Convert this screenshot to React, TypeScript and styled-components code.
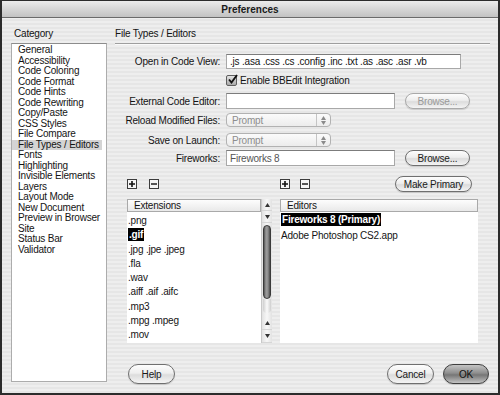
import styled, { createGlobalStyle } from "styled-components";

const GlobalStyle = createGlobalStyle`
  html, body {
    margin: 0;
    padding: 0;
    background: #ffffff;
  }
  body {
    font-family: "Liberation Sans", Arial, sans-serif;
    font-size: 10px;
    letter-spacing: -0.2px;
    color: #141414;
  }
`;

const categories = [
  "General",
  "Accessibility",
  "Code Coloring",
  "Code Format",
  "Code Hints",
  "Code Rewriting",
  "Copy/Paste",
  "CSS Styles",
  "File Compare",
  "File Types / Editors",
  "Fonts",
  "Highlighting",
  "Invisible Elements",
  "Layers",
  "Layout Mode",
  "New Document",
  "Preview in Browser",
  "Site",
  "Status Bar",
  "Validator",
];

const extensions = [
  ".png",
  ".gif",
  ".jpg .jpe .jpeg",
  ".fla",
  ".wav",
  ".aiff .aif .aifc",
  ".mp3",
  ".mpg .mpeg",
  ".mov",
];

const editors = ["Fireworks 8 (Primary)", "Adobe Photoshop CS2.app"];

const Up = () => (
  <svg width="5" height="4" viewBox="0 0 5 4">
    <path d="M2.5 0 L5 4 L0 4 Z" fill="#333" />
  </svg>
);

const Down = () => (
  <svg width="5" height="4" viewBox="0 0 5 4">
    <path d="M0 0 L5 0 L2.5 4 Z" fill="#333" />
  </svg>
);

const PlusIcon = () => (
  <svg width="8" height="8" viewBox="0 0 8 8">
    <path d="M4 1 V7 M1 4 H7" stroke="#111" strokeWidth="1.6" />
  </svg>
);

const MinusIcon = () => (
  <svg width="8" height="8" viewBox="0 0 8 8">
    <path d="M1 4 H7" stroke="#111" strokeWidth="1.4" />
  </svg>
);

const CheckMark = () => (
  <svg width="11" height="11" viewBox="0 0 11 11">
    <path d="M2 5.5 L4.5 8.5 L10 1" stroke="#111" strokeWidth="1.9" fill="none" />
  </svg>
);

export default function App() {
  return (
    <>
      <GlobalStyle />
      <Window>
        <TitleBar>Preferences</TitleBar>
        <Body>
          <Sidebar>
            <SideLabel>Category</SideLabel>
            <SideList>
              {categories.map((c) => (
                <SideItem key={c} $selected={c === "File Types / Editors"}>
                  {c}
                </SideItem>
              ))}
            </SideList>
          </Sidebar>

          <Main>
            <PaneHeader>File Types / Editors</PaneHeader>

            <FormRow $mt={10} $h={15}>
              <Label>Open in Code View:</Label>
              <TextField $w={235} $h={15}>
                .js .asa .css .cs .config .inc .txt .as .asc .asr .vb
              </TextField>
            </FormRow>

            <FormRow $mt={6} $h={11}>
              <Label />
              <CheckBox>
                <CheckMark />
              </CheckBox>
              <CheckText>Enable BBEdit Integration</CheckText>
            </FormRow>

            <FormRow $mt={7} $h={16}>
              <Label>External Code Editor:</Label>
              <TextField $w={169} $h={16} />
              <PillButton $w={65} $h={16} $disabled>
                Browse...
              </PillButton>
            </FormRow>

            <FormRow $mt={4} $h={14}>
              <Label>Reload Modified Files:</Label>
              <Popup>
                <PopupText>Prompt</PopupText>
                <Stepper>
                  <Up />
                  <Down />
                </Stepper>
              </Popup>
            </FormRow>

            <FormRow $mt={6} $h={14}>
              <Label>Save on Launch:</Label>
              <Popup>
                <PopupText>Prompt</PopupText>
                <Stepper>
                  <Up />
                  <Down />
                </Stepper>
              </Popup>
            </FormRow>

            <FormRow $mt={3} $h={16}>
              <Label>Fireworks:</Label>
              <TextField $w={169} $h={16} $dim>
                Fireworks 8
              </TextField>
              <PillButton $w={65} $h={16}>
                Browse...
              </PillButton>
            </FormRow>

            <ListsArea>
              <ListColumn $w={145}>
                <Toolbar $gap={12}>
                  <SquareButton>
                    <PlusIcon />
                  </SquareButton>
                  <SquareButton>
                    <MinusIcon />
                  </SquareButton>
                </Toolbar>
                <ListFrame>
                  <ListBox>
                    <ColumnHeader>Extensions</ColumnHeader>
                    <ListRows $lh={14.3} $pt={2}>
                      {extensions.map((e) => (
                        <ListRow key={e} $lh={14.3}>
                          {e === ".gif" ? <Selected>{e}</Selected> : e}
                        </ListRow>
                      ))}
                    </ListRows>
                  </ListBox>
                  <ScrollBar>
                    <ArrowBox $h={12}>
                      <Up />
                    </ArrowBox>
                    <ArrowBox $h={12}>
                      <Down />
                    </ArrowBox>
                    <Track>
                      <Thumb />
                      <TrackEnd />
                    </Track>
                    <ArrowBox $h={13}>
                      <Up />
                    </ArrowBox>
                    <ArrowBox $h={13}>
                      <Down />
                    </ArrowBox>
                  </ScrollBar>
                </ListFrame>
              </ListColumn>

              <ListColumn $w={198}>
                <Toolbar $gap={10}>
                  <SquareButton>
                    <PlusIcon />
                  </SquareButton>
                  <SquareButton>
                    <MinusIcon />
                  </SquareButton>
                  <PrimaryButton $w={77} $h={16}>
                    Make Primary
                  </PrimaryButton>
                </Toolbar>
                <ListFrame>
                  <ListBox>
                    <ColumnHeader>Editors</ColumnHeader>
                    <ListRows $lh={16} $pt={0}>
                      {editors.map((e, i) => (
                        <ListRow key={e} $lh={16}>
                          {i === 0 ? <Selected>{e}</Selected> : e}
                        </ListRow>
                      ))}
                    </ListRows>
                  </ListBox>
                </ListFrame>
              </ListColumn>
            </ListsArea>

            <Footer>
              <PillButton $w={47} $h={20}>
                Help
              </PillButton>
              <ButtonGroup>
                <PillButton $w={47} $h={20}>
                  Cancel
                </PillButton>
                <DefaultButton $w={46} $h={20}>
                  OK
                </DefaultButton>
              </ButtonGroup>
            </Footer>
          </Main>
        </Body>
      </Window>
    </>
  );
}

const Window = styled.div`
  width: 500px;
  height: 395px;
  box-sizing: border-box;
  border: 2px solid #2c2c2c;
  border-top-width: 1px;
  display: flex;
  flex-direction: column;
  overflow: hidden;
  background: repeating-linear-gradient(
    180deg,
    #eeeeee 0px,
    #eeeeee 2px,
    #e6e6e6 2px,
    #e6e6e6 4px
  );
`;

const TitleBar = styled.div`
  height: 17px;
  box-sizing: border-box;
  border-bottom: 1px solid #6a6a6a;
  background: linear-gradient(180deg, #ececec 0%, #d6d6d6 50%, #c2c2c2 100%);
  display: flex;
  align-items: center;
  justify-content: center;
  font-weight: bold;
  letter-spacing: 0;
  color: #1a1a1a;
`;

const Body = styled.div`
  flex: 1;
  display: flex;
  padding: 10px 8px 0 9px;
`;

const Sidebar = styled.div`
  width: 96px;
  margin-right: 8px;
  display: flex;
  flex-direction: column;
`;

const SideLabel = styled.div`
  line-height: 12px;
  padding-left: 3px;
  margin-bottom: 3px;
`;

const SideList = styled.div`
  height: 339px;
  box-sizing: border-box;
  background: #ffffff;
  border: 1px solid #acacac;
  border-top-color: #8c8c8c;
  padding-top: 1px;
`;

const SideItem = styled.div<{ $selected?: boolean }>`
  height: 10.5px;
  line-height: 10.5px;
  padding-left: 6px;
  margin-right: 4px;
  white-space: nowrap;
  background: ${({ $selected }) => ($selected ? "#d4d4d4" : "transparent")};
`;

const Main = styled.div`
  width: 375px;
  display: flex;
  flex-direction: column;
`;

const PaneHeader = styled.div`
  line-height: 12px;
  padding-bottom: 3px;
  border-bottom: 1px solid #9e9e9e;
  box-shadow: 0 1px 0 #fafafa;
`;

const FormRow = styled.div<{ $mt: number; $h: number }>`
  display: flex;
  align-items: center;
  height: ${({ $h }) => $h}px;
  margin-top: ${({ $mt }) => $mt}px;
`;

const Label = styled.div`
  width: 105px;
  flex-shrink: 0;
  margin-right: 6px;
  text-align: right;
  white-space: nowrap;
`;

const TextField = styled.div<{ $w: number; $h: number; $dim?: boolean }>`
  width: ${({ $w }) => $w}px;
  height: ${({ $h }) => $h}px;
  box-sizing: border-box;
  background: #ffffff;
  border: 1px solid #a8a8a8;
  border-top-color: #7c7c7c;
  padding: 0 3px;
  display: flex;
  align-items: center;
  white-space: nowrap;
  overflow: hidden;
  color: ${({ $dim }) => ($dim ? "#555555" : "#141414")};
`;

const CheckBox = styled.div`
  width: 11px;
  height: 11px;
  box-sizing: border-box;
  border: 1px solid #5e5e5e;
  border-radius: 2px;
  background: linear-gradient(180deg, #e4e4e4, #a9a9a9);
  display: flex;
  align-items: center;
  justify-content: center;
  svg {
    margin-top: -2px;
    margin-right: -2px;
  }
`;

const CheckText = styled.div`
  margin-left: 3px;
`;

const PillButton = styled.div<{ $w: number; $h: number; $disabled?: boolean }>`
  width: ${({ $w }) => $w}px;
  height: ${({ $h }) => $h}px;
  box-sizing: border-box;
  margin-left: 10px;
  border-radius: ${({ $h }) => $h / 2}px;
  border: 1px solid ${({ $disabled }) => ($disabled ? "#a9a9a9" : "#6f6f6f")};
  background: linear-gradient(
    180deg,
    #fdfdfd 0%,
    #eeeeee 45%,
    #dcdcdc 55%,
    #f4f4f4 100%
  );
  display: flex;
  align-items: center;
  justify-content: center;
  white-space: nowrap;
  color: ${({ $disabled }) => ($disabled ? "#9a9a9a" : "#1a1a1a")};
  box-shadow: 0 1px 1px rgba(0, 0, 0, 0.15);
`;

const PrimaryButton = styled(PillButton)`
  margin-left: auto;
  margin-right: 6px;
`;

const DefaultButton = styled(PillButton)`
  margin-left: 0;
  border-color: #3e3e3e;
  background: linear-gradient(
    180deg,
    #c4c4c4 0%,
    #8e8e8e 45%,
    #767676 55%,
    #a8a8a8 85%,
    #c6c6c6 100%
  );
  color: #111111;
`;

const Popup = styled.div`
  width: 105px;
  height: 14px;
  box-sizing: border-box;
  border: 1px solid #b2b2b2;
  border-radius: 4px;
  background: linear-gradient(180deg, #fbfbfb, #ececec);
  display: flex;
  align-items: stretch;
`;

const PopupText = styled.div`
  flex: 1;
  padding-left: 5px;
  display: flex;
  align-items: center;
  color: #8d8d8d;
`;

const Stepper = styled.div`
  width: 13px;
  border-left: 1px solid #c4c4c4;
  display: flex;
  flex-direction: column;
  align-items: center;
  justify-content: center;
  gap: 1px;
  svg path {
    fill: #8a8a8a;
  }
`;

const ListsArea = styled.div`
  display: flex;
  gap: 8px;
  margin-top: 10px;
  margin-left: 12px;
`;

const ListColumn = styled.div<{ $w: number }>`
  width: ${({ $w }) => $w}px;
  display: flex;
  flex-direction: column;
`;

const Toolbar = styled.div<{ $gap: number }>`
  height: 16px;
  display: flex;
  align-items: center;
  gap: ${({ $gap }) => $gap}px;
  margin-bottom: 7px;
`;

const SquareButton = styled.div`
  width: 10px;
  height: 10px;
  box-sizing: border-box;
  border: 1px solid #3c3c3c;
  background: #f6f6f6;
  display: flex;
  align-items: center;
  justify-content: center;
`;

const ListFrame = styled.div`
  height: 144px;
  display: flex;
`;

const ListBox = styled.div`
  flex: 1;
  background: #ffffff;
  display: flex;
  flex-direction: column;
  overflow: hidden;
`;

const ColumnHeader = styled.div`
  height: 13px;
  box-sizing: border-box;
  border: 1px solid #a9a9a9;
  background: linear-gradient(180deg, #fdfdfd, #e9e9e9);
  padding-left: 6px;
  line-height: 11px;
`;

const ListRows = styled.div<{ $lh: number; $pt: number }>`
  padding-top: ${({ $pt }) => $pt}px;
`;

const ListRow = styled.div<{ $lh: number }>`
  height: ${({ $lh }) => $lh}px;
  line-height: ${({ $lh }) => $lh}px;
  padding-left: 1px;
  white-space: nowrap;
`;

const Selected = styled.span`
  background: #000000;
  color: #ffffff;
  font-weight: bold;
  padding: 1px 1px;
`;

const ScrollBar = styled.div`
  width: 11px;
  box-sizing: border-box;
  border-left: 1px solid #c9c9c9;
  background: linear-gradient(90deg, #e2e2e2, #f7f7f7 50%, #e2e2e2);
  display: flex;
  flex-direction: column;
`;

const ArrowBox = styled.div<{ $h: number }>`
  height: ${({ $h }) => $h}px;
  display: flex;
  align-items: center;
  justify-content: center;
  border-bottom: 1px solid #d6d6d6;
  box-sizing: border-box;
`;

const Track = styled.div`
  flex: 1;
  padding: 2px 1px 0;
  display: flex;
  flex-direction: column;
`;

const Thumb = styled.div`
  height: 74px;
  border-radius: 5px;
  border: 1px solid #3a3a3a;
  box-sizing: border-box;
  background: linear-gradient(
    90deg,
    #555555 0%,
    #9c9c9c 35%,
    #8e8e8e 65%,
    #4a4a4a 100%
  );
`;

const TrackEnd = styled.div`
  height: 14px;
  border-radius: 0 0 5px 5px;
  background: linear-gradient(90deg, #cfcfcf, #fafafa 50%, #cfcfcf);
`;

const Footer = styled.div`
  margin-top: 21px;
  padding-left: 3px;
  padding-right: 1px;
  display: flex;
  justify-content: space-between;
  align-items: center;
`;

const ButtonGroup = styled.div`
  display: flex;
  gap: 9px;
`;
